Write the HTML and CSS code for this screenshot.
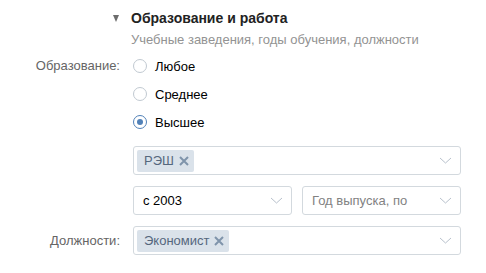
FILE: index.html
```html
<!DOCTYPE html>
<html lang="ru">
<head>
  <meta charset="UTF-8">
  <title>Образование и работа</title>
  <link rel="stylesheet" href="styles.css">
</head>
<body>

<div class="seccion">
  <div class="cabecera">
    <span class="flecha"></span>
    <div>
      <div class="titulo">Образование и работа</div>
      <div class="subtitulo">Учебные заведения, годы обучения, должности</div>
    </div>
  </div>

  <div class="fila">
    <div class="etiqueta">Образование:</div>
    <div class="control">
      <label class="radio"><span class="circulo"></span>Любое</label>
      <label class="radio"><span class="circulo"></span>Среднее</label>
      <label class="radio"><span class="circulo activo"></span>Высшее</label>

      <div class="caja caja-tags">
        <span class="tag">РЭШ
          <svg class="cruz" width="10" height="10" viewBox="0 0 10 10"><path d="M1 1 L9 9 M9 1 L1 9"/></svg>
        </span>
        <svg class="chevron" width="13" height="7" viewBox="0 0 13 7"><path d="M1 1 L6.5 6 L12 1"/></svg>
      </div>

      <div class="par">
        <div class="caja">
          <span class="valor">с 2003</span>
          <svg class="chevron" width="13" height="7" viewBox="0 0 13 7"><path d="M1 1 L6.5 6 L12 1"/></svg>
        </div>
        <div class="caja">
          <span class="valor gris">Год выпуска, по</span>
          <svg class="chevron" width="13" height="7" viewBox="0 0 13 7"><path d="M1 1 L6.5 6 L12 1"/></svg>
        </div>
      </div>
    </div>
  </div>

  <div class="fila fila-dos">
    <div class="etiqueta">Должности:</div>
    <div class="control">
      <div class="caja caja-tags">
        <span class="tag">Экономист
          <svg class="cruz" width="10" height="10" viewBox="0 0 10 10"><path d="M1 1 L9 9 M9 1 L1 9"/></svg>
        </span>
        <svg class="chevron" width="13" height="7" viewBox="0 0 13 7"><path d="M1 1 L6.5 6 L12 1"/></svg>
      </div>
    </div>
  </div>
</div>

</body>
</html>
```

FILE: styles.css
```css
body {
  font-family: 'Liberation Sans', Arial, sans-serif;
  font-size: 13px;
  color: #000;
  background-color: #fff;
  margin: 0;
}

.seccion {
  padding-top: 9px;
}

.cabecera {
  display: flex;
  padding-left: 113px;
  gap: 12px;
}

.flecha {
  width: 0;
  height: 0;
  border-left: 3.5px solid transparent;
  border-right: 3.5px solid transparent;
  border-top: 7px solid #6d6d6d;
  margin-top: 6px;
}

.titulo {
  font-weight: bold;
  font-size: 14px;
  color: #222;
  line-height: 18px;
}

.subtitulo {
  color: #939393;
  line-height: 18px;
  margin-top: 4px;
}

.fila {
  display: grid;
  grid-template-columns: 120px 328px;
  column-gap: 13px;
  margin-top: 3px;
}

.fila-dos {
  margin-top: 11px;
}

.etiqueta {
  text-align: right;
  color: #656565;
  line-height: 28px;
  height: 28px;
}

.fila-dos .etiqueta {
  line-height: 29px;
}

.radio {
  display: flex;
  align-items: center;
  height: 28px;
  gap: 8px;
  color: #000;
}

.circulo {
  width: 12px;
  height: 12px;
  border: 1px solid #c1c9d1;
  border-radius: 50%;
  box-sizing: content-box;
  position: relative;
}

.circulo.activo {
  border-color: #5181b8;
}

.circulo.activo::after {
  content: '';
  position: absolute;
  left: 3px;
  top: 3px;
  width: 6px;
  height: 6px;
  border-radius: 50%;
  background-color: #5181b8;
}

.caja {
  display: flex;
  align-items: center;
  height: 29px;
  border: 1px solid #d3d9de;
  border-radius: 3px;
  box-sizing: border-box;
  padding: 0 8px 0 9px;
  background-color: #fff;
}

.caja-tags {
  padding-left: 3px;
  margin-top: 10px;
}

.fila-dos .caja-tags {
  margin-top: 0;
}

.par {
  display: grid;
  grid-template-columns: 159px 159px;
  column-gap: 10px;
  margin-top: 11px;
}

.valor {
  flex: 1;
  color: #000;
}

.valor.gris {
  color: #828282;
}

.tag {
  display: inline-flex;
  align-items: center;
  height: 22px;
  padding: 0 5px 0 7px;
  background-color: #dae2ea;
  color: #55677d;
  border-radius: 2px;
  gap: 5px;
}

.cruz path {
  stroke: #7f94ab;
  stroke-width: 2;
  fill: none;
}

.caja-tags .chevron {
  margin-left: auto;
}

.chevron path {
  stroke: #b8c1cc;
  stroke-width: 1;
  fill: none;
}
```
